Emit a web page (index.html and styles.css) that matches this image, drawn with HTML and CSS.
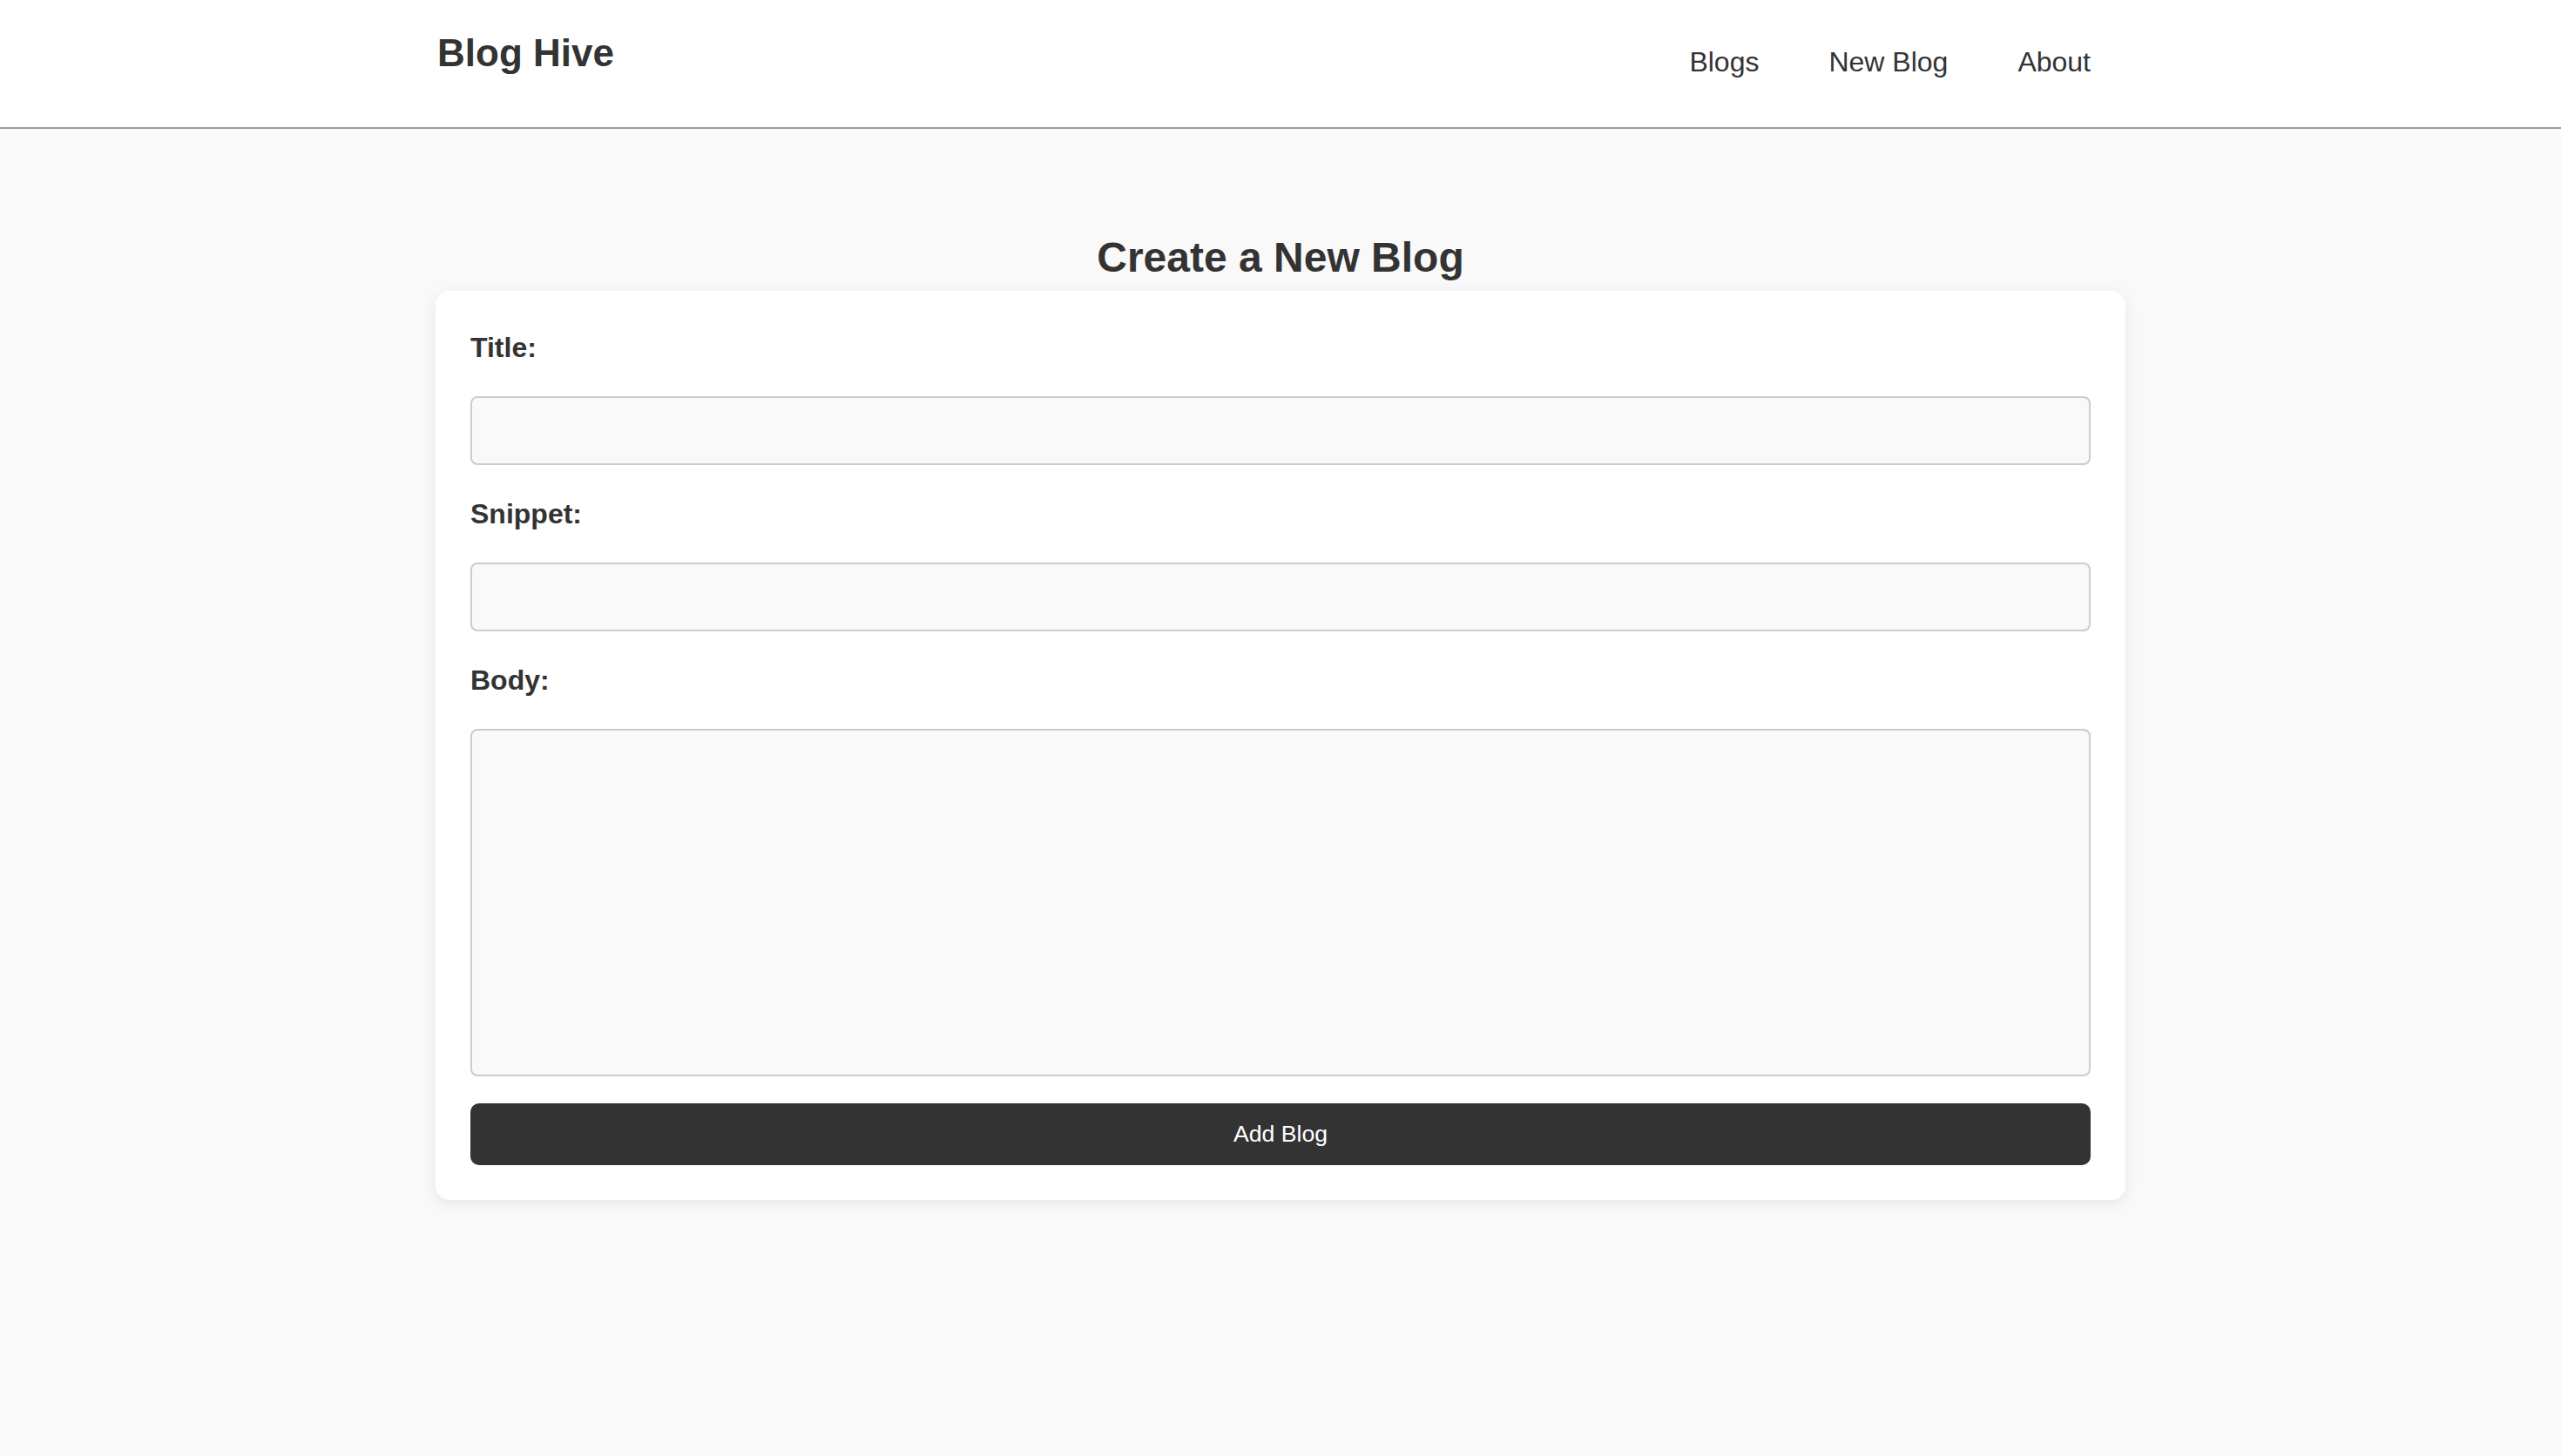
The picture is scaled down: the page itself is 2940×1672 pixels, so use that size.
FILE: index.html
```html
<!DOCTYPE html>
<html lang="en">
<head>
<meta charset="utf-8">
<title>Blog Hive</title>
<link rel="stylesheet" href="styles.css">
</head>
<body>
<header class="site-header">
  <div class="header-inner">
    <h1 class="logo">Blog Hive</h1>
    <nav class="nav">
      <a class="nav-link" href="#">Blogs</a>
      <a class="nav-link" href="#">New Blog</a>
      <a class="nav-link" href="#">About</a>
    </nav>
  </div>
</header>
<main class="main">
  <h2 class="page-title">Create a New Blog</h2>
  <form class="card">
    <label class="field-label" for="title">Title:</label>
    <input class="field-input" id="title" type="text">
    <label class="field-label" for="snippet">Snippet:</label>
    <input class="field-input" id="snippet" type="text">
    <label class="field-label" for="body">Body:</label>
    <textarea class="field-input field-textarea" id="body"></textarea>
    <button class="submit-btn" type="button">Add Blog</button>
  </form>
</main>
</body>
</html>
```

FILE: styles.css
```css
* {
  box-sizing: border-box;
}

html, body {
  margin: 0;
  padding: 0;
}

body {
  background: #f9f9f9;
  color: #333;
  font-family: "Liberation Sans", Arial, Helvetica, sans-serif;
  min-height: 1672px;
}

.site-header {
  background: #ffffff;
  border-bottom: 2px solid #9a9a9a;
}

.header-inner {
  width: 1940px;
  margin: 0 auto;
  height: 146px;
  display: flex;
  justify-content: space-between;
  align-items: flex-start;
}

.logo {
  margin: 36px 0 0 2px;
  font-size: 44px;
  font-weight: 700;
  line-height: normal;
  color: #333;
}

.nav {
  display: flex;
  margin-top: 53px;
}

.nav-link {
  font-size: 32px;
  line-height: normal;
  color: #333;
  text-decoration: none;
  padding: 0 40px;
}

.nav-link:last-child {
  padding-right: 40px;
}

.main {
  width: 1940px;
  margin: 0 auto;
  padding-top: 120px;
}

.page-title {
  margin: 0 0 11px;
  text-align: center;
  font-size: 48px;
  font-weight: 700;
  line-height: normal;
  color: #333;
}

.card {
  background: #ffffff;
  border-radius: 16px;
  padding: 40px;
  box-shadow: 0 4px 16px rgba(0, 0, 0, 0.08);
}

.field-label {
  display: block;
  padding-top: 7px;
  margin: 0 0 37px;
  font-size: 32px;
  font-weight: 700;
  line-height: 37px;
  color: #333;
}

.field-input {
  display: block;
  width: 100%;
  height: 79px;
  margin: 0 0 31px;
  background: #f9f9f9;
  border: 2px solid #cccccc;
  border-radius: 8px;
  font-family: inherit;
  font-size: 28px;
  padding: 16px;
  outline: none;
}

.field-textarea {
  height: 399px;
  resize: none;
}

.submit-btn {
  display: block;
  width: 100%;
  height: 71px;
  background: #333333;
  color: #ffffff;
  border: none;
  border-radius: 10px;
  font-family: "Liberation Sans", Arial, Helvetica, sans-serif;
  font-size: 26.67px;
  cursor: pointer;
}
```
